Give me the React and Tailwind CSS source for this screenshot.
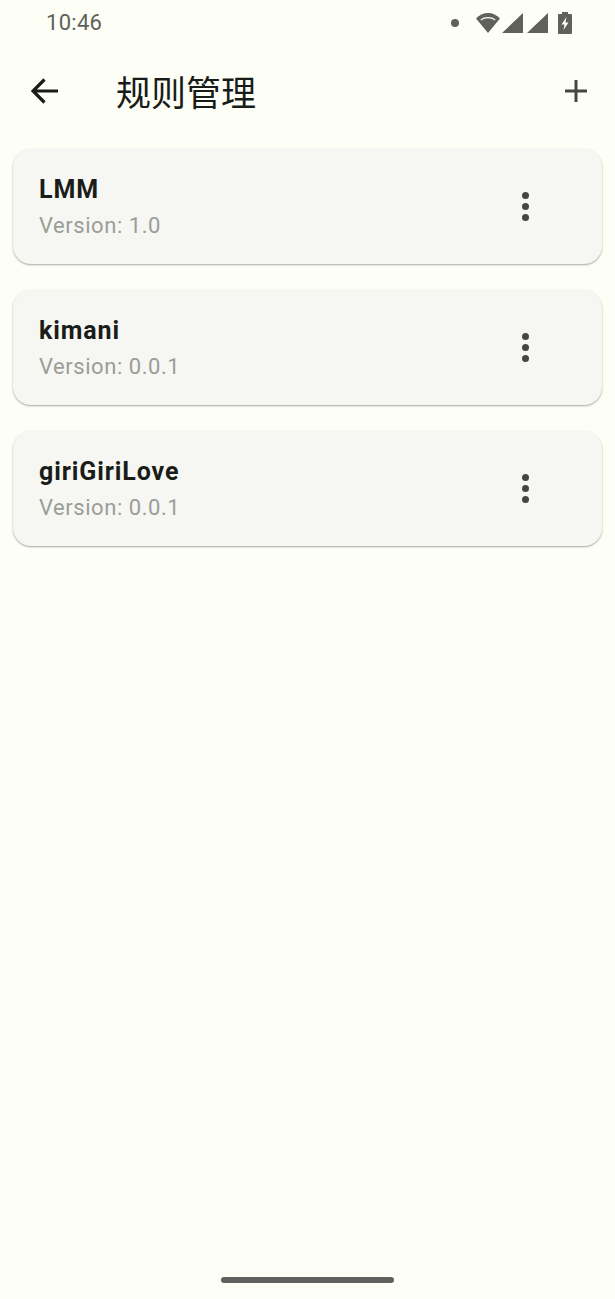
import React from "react";

const rules = [
  { name: "LMM", version: "1.0" },
  { name: "kimani", version: "0.0.1" },
  { name: "giriGiriLove", version: "0.0.1" },
];

function StatusIcons() {
  return (
    <div className="flex items-center">
      <div className="w-[8px] h-[8px] rounded-full bg-[#5f615c] mr-[17px]" />
      <svg width="24" height="20" viewBox="0 0 24 20" className="mr-[2px]">
        <path d="M12 20 L0 5.5 C3 2 7.5 0 12 0 C16.500 0 21 2 24 5.500 Z" fill="#5f615c" />
        <path d="M4.500 6.500 C6.500 4.800 9.200 4 12 4 C14.800 4 17.500 4.800 19.500 6.500 L18.800 7.500 C16.800 6 14.500 5.300 12 5.300 C9.500 5.300 7.200 6 5.200 7.500 Z" fill="#fdfff6" />
      </svg>
      <svg width="21" height="20" viewBox="0 0 21 20" className="mr-[4px]">
        <path d="M21 0 V20 H0 Z" fill="#5f615c" />
      </svg>
      <svg width="21" height="20" viewBox="0 0 21 20" className="mr-[10px]">
        <path d="M21 0 V20 H0 Z" fill="#5f615c" />
      </svg>
      <svg width="14" height="22" viewBox="0 0 14 22">
        <path d="M4 0 H10 V2 H13 A1 1 0 0 1 14 3 V21 A1 1 0 0 1 13 22 H1 A1 1 0 0 1 0 21 V3 A1 1 0 0 1 1 2 H4 Z" fill="#5f615c" />
        <path d="M8.500 5 L3.500 12.500 H6.500 L5.500 18 L10.500 10.500 H7.500 Z" fill="#fdfff6" />
      </svg>
    </div>
  );
}

function RuleCard({ name, version }) {
  return (
    <div className="flex items-center justify-between h-[115px] pl-[26px] pr-[73px] rounded-[18px] bg-[#f6f7f2] shadow-[0_1px_2px_rgba(0,0,0,0.35)]">
      <div className="flex flex-col pt-[1px]">
        <div className="text-[25px] leading-[32px] font-bold tracking-[0.9px] text-[#191c18]">
          {name}
        </div>
        <div className="mt-[5px] text-[22px] leading-[30px] tracking-[0.55px] text-[#9b9d98]">
          Version: {version}
        </div>
      </div>
      <div className="flex flex-col gap-[4px] mb-[1px]">
        <div className="w-[7px] h-[7px] rounded-full bg-[#444641]" />
        <div className="w-[7px] h-[7px] rounded-full bg-[#444641]" />
        <div className="w-[7px] h-[7px] rounded-full bg-[#444641]" />
      </div>
    </div>
  );
}

export default function App() {
  return (
    <div className="flex flex-col w-[615px] h-[1299px] bg-[#fdfff6] font-['Roboto','Noto_Sans_CJK_SC',sans-serif]">
      <div className="flex items-center justify-between h-[45px] pl-[46px] pr-[43px] shrink-0">
        <span className="text-[22px] tracking-[0.3px] text-[#5f615c]">10:46</span>
        <StatusIcons />
      </div>

      <header className="flex items-center justify-between h-[92px] pl-[31px] pr-[28px] shrink-0">
        <div className="flex items-center">
          <svg width="27" height="26" viewBox="0 0 27 26" fill="none" stroke="#191c18" strokeWidth="3.2">
            <path d="M27 13 H2.500 M13.500 1.500 L2 13 L13.500 24.500" />
          </svg>
          <h1 className="ml-[58px] text-[35px] leading-[44px] font-normal text-[#191c18] font-['Noto_Sans_CJK_SC',sans-serif]">
            规则管理
          </h1>
        </div>
        <svg width="22" height="22" viewBox="0 0 22 22" fill="none" stroke="#444641" strokeWidth="3">
          <path d="M0 11 H22 M11 0 V22" />
        </svg>
      </header>

      <div className="flex flex-col gap-[26px] px-[13px] pt-[12px]">
        {rules.map((rule) => (
          <RuleCard key={rule.name} name={rule.name} version={rule.version} />
        ))}
      </div>

      <div className="flex justify-center mt-auto pb-[16px]">
        <div className="w-[173px] h-[6px] rounded-full bg-[#5f615c]" />
      </div>
    </div>
  );
}
